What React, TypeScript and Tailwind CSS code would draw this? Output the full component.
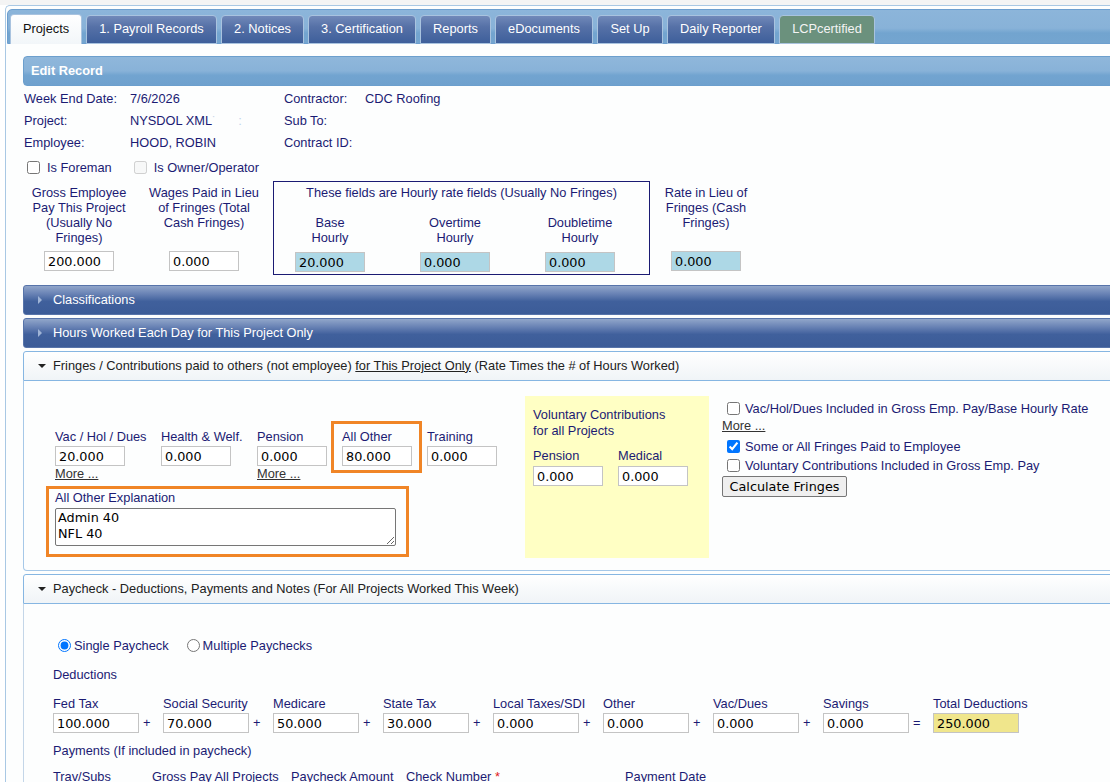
import React from 'react';

const navy = 'text-[#1b1b73]';

type InputProps = { value: string; w?: string; bg?: string };

const Field: React.FC<InputProps> = ({ value, w = 'w-[70px]', bg = 'bg-white' }) => (
  <input
    readOnly
    value={value}
    className={`block h-[20px] ${w} ${bg} border border-[#c4c4c4] px-[3px] font-['DejaVu_Sans',Verdana,sans-serif] text-[12.8px] text-black outline-none`}
  />
);

const Check: React.FC<{ checked?: boolean; disabled?: boolean; className?: string }> = ({ checked, disabled, className = '' }) => (
  <input type="checkbox" readOnly checked={!!checked} disabled={disabled} className={`m-0 h-[13px] w-[13px] ${className}`} />
);

const tabs = [
  { label: 'Projects', w: 'w-[72px]', kind: 'active' },
  { label: '1. Payroll Records', w: 'w-[131px]', kind: 'dark' },
  { label: '2. Notices', w: 'w-[83px]', kind: 'dark' },
  { label: '3. Certification', w: 'w-[108px]', kind: 'dark' },
  { label: 'Reports', w: 'w-[71px]', kind: 'dark' },
  { label: 'eDocuments', w: 'w-[98px]', kind: 'dark' },
  { label: 'Set Up', w: 'w-[66px]', kind: 'dark' },
  { label: 'Daily Reporter', w: 'w-[108px]', kind: 'dark' },
  { label: 'LCPcertified', w: 'w-[96px]', kind: 'green' },
];

const tabStyle: Record<string, string> = {
  active: 'h-[30px] pb-[2px] bg-[linear-gradient(180deg,#ffffff,#f2f6f9)] text-[#111] border-b-0',
  dark: 'h-[29px] pb-[1px] bg-[linear-gradient(180deg,#7189b9_0%,#5671a7_40%,#3e5f9b_100%)] text-white',
  green: 'h-[29px] pb-[1px] bg-[#6b917d] text-[#f4f4f4]',
};

const DarkHeader: React.FC<{ title: string; className?: string }> = ({ title, className = '' }) => (
  <div
    className={`flex h-[30px] items-center rounded-l-[3px] border border-[#5774aa] bg-[linear-gradient(180deg,#91a6ca_0%,#6680b3_30%,#40609c_55%,#3c5c98_100%)] pl-[14px] text-white ${className}`}
  >
    <span className="w-[15px]">
      <span className="block h-0 w-0 border-y-[4px] border-l-[4px] border-y-transparent border-l-[#9fb4d6]" />
    </span>
    <span>{title}</span>
  </div>
);

const LightHeader: React.FC<{ children: React.ReactNode }> = ({ children }) => (
  <div className="flex h-[30px] items-center rounded-t-[3px] border border-[#86b6e2] bg-[linear-gradient(180deg,#ffffff,#f0f4f7)] pb-[1px] pl-[14px] text-[#222]">
    <span className="w-[15px]">
      <span className="block h-0 w-0 border-x-[4px] border-t-[4px] border-x-transparent border-t-[#222]" />
    </span>
    <span>{children}</span>
  </div>
);

const FringeCol: React.FC<{ label: string; value: string; more?: boolean; w: string }> = ({ label, value, more, w }) => (
  <div className={`${w} pt-[8px]`}>
    <div className="leading-[16px] whitespace-nowrap">{label}</div>
    <div className="mt-[1px]">
      <Field value={value} />
    </div>
    {more && <div className="leading-[16px] text-[#333] underline">More ...</div>}
  </div>
);

const deductions = [
  { label: 'Fed Tax', value: '100.000' },
  { label: 'Social Security', value: '70.000' },
  { label: 'Medicare', value: '50.000' },
  { label: 'State Tax', value: '30.000' },
  { label: 'Local Taxes/SDI', value: '0.000' },
  { label: 'Other', value: '0.000' },
  { label: 'Vac/Dues', value: '0.000' },
  { label: 'Savings', value: '0.000' },
];

const App: React.FC = () => {
  return (
    <div className="h-[782px] w-full overflow-hidden bg-white font-['Liberation_Sans',Arial,sans-serif] text-[12.8px]">
      <div className="h-[5px] bg-[#f4f4f4]" />
      <div className="ml-[5px] w-[1140px] rounded-tl-[5px] border-l border-t border-[#a9c8e4] bg-[#fdfefe] pl-[1px] pt-[3px]">
        {/* tab bar */}
        <div className="flex h-[35px] items-end gap-[4px] rounded-tl-[5px] border border-[#6d9fcf] bg-[linear-gradient(180deg,#8cb5da_0%,#88b2d8_55%,#72a4cf_70%,#74a5d0_100%)] pl-[2px]">
          {tabs.map((t) => (
            <div
              key={t.label}
              className={`-mb-[1px] flex ${t.w} items-center justify-center rounded-t-[4px] border border-[#a9c3df] ${tabStyle[t.kind]}`}
            >
              {t.label}
            </div>
          ))}
        </div>

        <div className="pl-[16px] pt-[12px]">
          {/* Edit Record */}
          <div className="flex h-[30px] items-center rounded-l-[4px] border border-[#6c9fcd] bg-[linear-gradient(180deg,#8fb7db_0%,#88b2d8_50%,#72a4d0_65%,#6fa1ce_100%)] pl-[7px] font-bold text-white">
            Edit Record
          </div>

          {/* info */}
          <div className={`mt-[2px] pl-[1px] ${navy}`}>
            <div className="flex h-[22px] items-center">
              <span className="w-[106px]">Week End Date:</span>
              <span className="w-[154px]">7/6/2026</span>
              <span className="w-[81px]">Contractor:</span>
              <span>CDC Roofing</span>
            </div>
            <div className="flex h-[22px] items-center">
              <span className="w-[106px]">Project:</span>
              <span className="w-[154px]">
                NYSDOL XML<span className="text-[#c8d4e8]">˙</span>
                <span className="ml-[22px] text-[#c0d4ec]">:</span>
              </span>
              <span className="w-[81px]">Sub To:</span>
            </div>
            <div className="flex h-[22px] items-center">
              <span className="w-[106px]">Employee:</span>
              <span className="w-[154px]">HOOD, ROBIN</span>
              <span className="w-[81px]">Contract ID:</span>
            </div>
            <div className="mt-[1px] flex h-[25px] items-center">
              <Check className="ml-[3px] mr-[7px]" />
              <span>Is Foreman</span>
              <Check disabled className="ml-[22px] mr-[7px]" />
              <span>Is Owner/Operator</span>
            </div>
          </div>

          {/* rates */}
          <div className={`mt-[1px] flex items-start ${navy}`}>
            <div className="ml-[6px] flex w-[100px] flex-col items-center pt-[4px] text-center">
              <div className="h-[60px] leading-[15px]">Gross Employee Pay This Project (Usually No Fringes)</div>
              <div className="mt-[6px]">
                <Field value="200.000" />
              </div>
            </div>
            <div className="ml-[19px] flex w-[112px] flex-col items-center pt-[4px] text-center">
              <div className="h-[60px] leading-[15px]">Wages Paid in Lieu of Fringes (Total Cash Fringes)</div>
              <div className="mt-[6px]">
                <Field value="0.000" />
              </div>
            </div>
            <div className="ml-[13px] w-[377px] border border-[#1b1b73] pb-[2px] pt-[3px]">
              <div className="text-center leading-[15px]">These fields are Hourly rate fields (Usually No Fringes)</div>
              <div className="mt-[15px] flex gap-[25px] pl-[6px]">
                {[
                  ['Base', '20.000'],
                  ['Overtime', '0.000'],
                  ['Doubletime', '0.000'],
                ].map(([l, v]) => (
                  <div key={l} className="flex w-[100px] flex-col items-center text-center">
                    <div className="h-[30px] leading-[15px]">
                      {l}
                      <br />
                      Hourly
                    </div>
                    <div className="mt-[7px]">
                      <Field value={v} bg="bg-[#add8e6]" />
                    </div>
                  </div>
                ))}
              </div>
            </div>
            <div className="ml-[6px] flex w-[100px] flex-col items-center pt-[4px] text-center">
              <div className="h-[60px] w-[92px] leading-[15px]">Rate in Lieu of Fringes (Cash Fringes)</div>
              <div className="mt-[6px]">
                <Field value="0.000" bg="bg-[#add8e6]" />
              </div>
            </div>
          </div>

          <DarkHeader title="Classifications" className="mt-[10px]" />
          <DarkHeader title="Hours Worked Each Day for This Project Only" className="mt-[3px]" />

          {/* fringes */}
          <div className="mt-[3px]">
            <LightHeader>
              Fringes / Contributions paid to others (not employee) <span className="underline">for This Project Only</span> (Rate
              Times the # of Hours Worked)
            </LightHeader>
            <div className={`flex items-start rounded-bl-[4px] border-x border-b border-[#a6c8e8] pb-[12px] pl-[22px] pt-[15px] ${navy}`}>
              <div className="mt-[25px] w-[479px]">
                <div className="flex items-start pl-[9px]">
                  <FringeCol w="w-[106px]" label="Vac / Hol / Dues" value="20.000" more />
                  <FringeCol w="w-[96px]" label="Health & Welf." value="0.000" />
                  <FringeCol w="w-[74px]" label="Pension" value="0.000" more />
                  <div className="w-[91px] border-[3px] border-[#f08526] pb-[4px] pl-[8px] pt-[5px]">
                    <div className="leading-[16px]">All Other</div>
                    <div className="mt-[1px]">
                      <Field value="80.000" />
                    </div>
                  </div>
                  <div className="ml-[5px]">
                    <FringeCol w="w-[72px]" label="Training" value="0.000" />
                  </div>
                </div>
                <div className="mt-[4px] w-[363px] border-[3px] border-[#f08526] pb-[8px] pl-[6px] pt-[1px]">
                  <div className="leading-[16px]">All Other Explanation</div>
                  <textarea
                    readOnly
                    value={'Admin 40\nNFL 40'}
                    className="mt-[2px] block h-[38px] w-[341px] resize-y rounded-[2px] border border-[#767676] bg-white px-[2px] py-[1px] font-['DejaVu_Sans',Verdana,sans-serif] text-[12.8px] leading-[16px] text-black outline-none"
                  />
                </div>
              </div>

              <div className="h-[162px] w-[184px] bg-[#ffffc4] px-[8px] pt-[11px]">
                <div className="leading-[16px]">
                  Voluntary Contributions
                  <br />
                  for all Projects
                </div>
                <div className="mt-[9px] flex gap-[15px]">
                  <div>
                    <div className="leading-[16px]">Pension</div>
                    <div className="mt-[2px]">
                      <Field value="0.000" />
                    </div>
                  </div>
                  <div>
                    <div className="leading-[16px]">Medical</div>
                    <div className="mt-[2px]">
                      <Field value="0.000" />
                    </div>
                  </div>
                </div>
              </div>

              <div className="ml-[13px] pt-[3px]">
                <div className="flex h-[19px] items-center">
                  <Check className="ml-[5px] mr-[5px]" />
                  <span>Vac/Hol/Dues Included in Gross Emp. Pay/Base Hourly Rate</span>
                </div>
                <div className="leading-[16px] text-[#333] underline">More ...</div>
                <div className="mt-[3px] flex h-[19px] items-center">
                  <Check checked className="ml-[5px] mr-[5px]" />
                  <span>Some or All Fringes Paid to Employee</span>
                </div>
                <div className="flex h-[19px] items-center">
                  <Check className="ml-[5px] mr-[5px]" />
                  <span>Voluntary Contributions Included in Gross Emp. Pay</span>
                </div>
                <button className="mt-[1px] h-[21px] w-[125px] rounded-[2px] border border-[#767676] bg-[#efefef] font-['DejaVu_Sans',Verdana,sans-serif] text-[12.8px] text-black">
                  Calculate Fringes
                </button>
              </div>
            </div>
          </div>

          {/* paycheck */}
          <div className="mt-[3px]">
            <LightHeader>Paycheck - Deductions, Payments and Notes (For All Projects Worked This Week)</LightHeader>
            <div className={`border-l border-[#c4d6e8] pb-[20px] pl-[29px] pt-[32px] ${navy}`}>
              <div className="flex h-[19px] items-center">
                <input type="radio" readOnly checked name="pc" className="m-0 ml-[5px] mr-[3px] h-[13px] w-[13px]" />
                <span>Single Paycheck</span>
                <input type="radio" readOnly checked={false} name="pc" className="m-0 ml-[18px] mr-[3px] h-[13px] w-[13px]" />
                <span>Multiple Paychecks</span>
              </div>
              <div className="mt-[12px] leading-[16px]">Deductions</div>
              <div className="mt-[13px] flex items-start">
                {deductions.map((d, i) => (
                  <React.Fragment key={d.label}>
                    <div className="w-[86px]">
                      <div className="whitespace-nowrap leading-[16px]">{d.label}</div>
                      <div className="mt-[1px]">
                        <Field value={d.value} w="w-[86px]" />
                      </div>
                    </div>
                    <div className="w-[24px] pt-[17px]">
                      <div className="flex h-[20px] items-center pl-[4px]">{i === deductions.length - 1 ? '=' : '+'}</div>
                    </div>
                  </React.Fragment>
                ))}
                <div className="w-[86px]">
                  <div className="whitespace-nowrap leading-[16px]">Total Deductions</div>
                  <div className="mt-[1px]">
                    <Field value="250.000" w="w-[86px]" bg="bg-[#f0e68c]" />
                  </div>
                </div>
              </div>
              <div className="mt-[10px] leading-[16px]">Payments (If included in paycheck)</div>
              <div className="mt-[10px] flex leading-[16px]">
                <span className="w-[99px]">Trav/Subs</span>
                <span className="w-[139px]">Gross Pay All Projects</span>
                <span className="w-[115px]">Paycheck Amount</span>
                <span className="w-[219px]">
                  Check Number <span className="text-[#e02020]">*</span>
                </span>
                <span>Payment Date</span>
              </div>
            </div>
          </div>
        </div>
      </div>
    </div>
  );
};

export default App;
